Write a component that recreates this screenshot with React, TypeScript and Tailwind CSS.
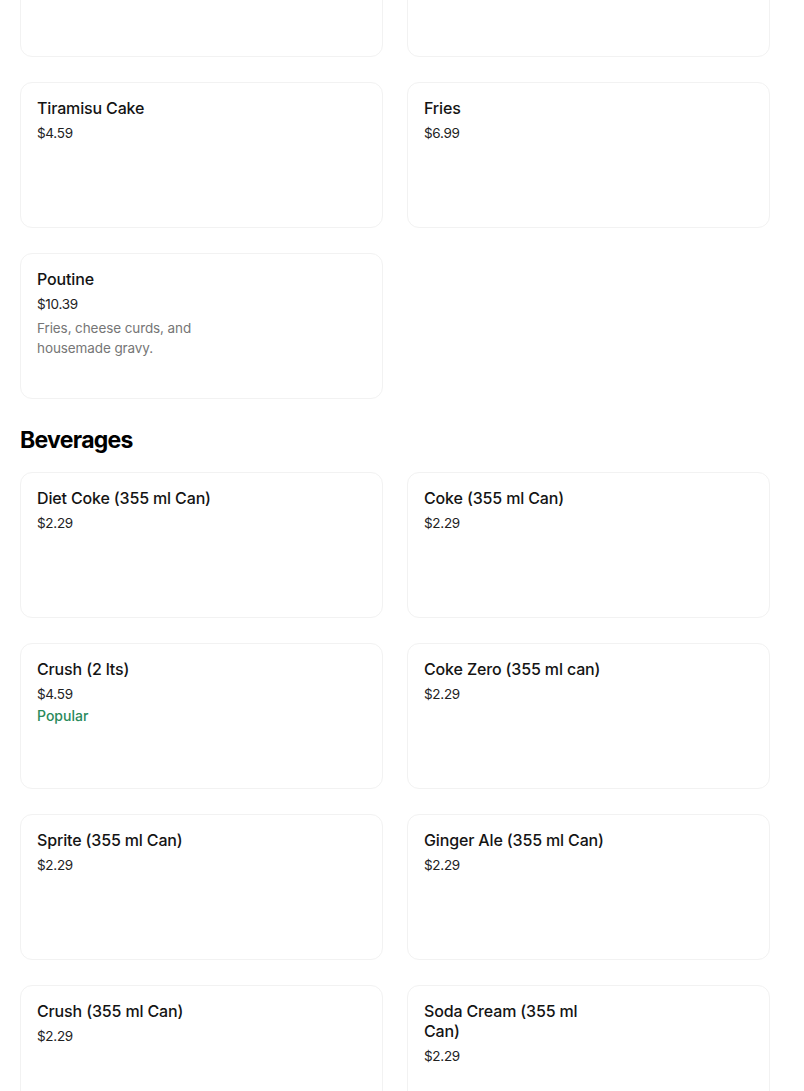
import React from "react";

type Item = { name: string; price: string; desc?: string; popular?: boolean };

const top: Item[] = [
  { name: "", price: "" },
  { name: "", price: "" },
  { name: "Tiramisu Cake", price: "$4.59" },
  { name: "Fries", price: "$6.99" },
  { name: "Poutine", price: "$10.39", desc: "Fries, cheese curds, and housemade gravy." },
];

const bev: Item[] = [
  { name: "Diet Coke (355 ml Can)", price: "$2.29" },
  { name: "Coke (355 ml Can)", price: "$2.29" },
  { name: "Crush (2 lts)", price: "$4.59", popular: true },
  { name: "Coke Zero (355 ml can)", price: "$2.29" },
  { name: "Sprite (355 ml Can)", price: "$2.29" },
  { name: "Ginger Ale (355 ml Can)", price: "$2.29" },
  { name: "Crush (355 ml Can)", price: "$2.29" },
  { name: "Soda Cream (355 ml Can)", price: "$2.29" },
];

function Card({ item }: { item: Item }) {
  return (
    <div className="h-[146px] rounded-xl border border-[#f2f2f2] bg-white px-4 pt-[15px]">
      {item.name && (
        <div className="max-w-[186px]">
          <div className="text-[16px] leading-5 font-medium tracking-[-0.15px] text-[#141414]">{item.name}</div>
          <div className="mt-[5px] text-[13.5px] leading-5 tracking-[-0.3px] text-[#222]">{item.price}</div>
          {item.desc && (
            <div className="mt-1 text-[13.5px] leading-5 tracking-[-0.1px] text-[#767676]">{item.desc}</div>
          )}
          {item.popular && (
            <div className="mt-[2px] text-[14px] leading-5 font-medium text-[#2a8a5b]">Popular</div>
          )}
        </div>
      )}
    </div>
  );
}

export default function App() {
  return (
    <div className="min-h-screen bg-white overflow-hidden" style={{ fontFamily: "Inter, 'Noto Sans', sans-serif" }}>
      <div className="w-[750px] ml-5 -mt-[89px]">
        <div className="grid grid-cols-2 gap-x-6 gap-y-[25px]">
          {top.map((it, i) => (
            <Card key={i} item={it} />
          ))}
        </div>
        <h2 className="mt-[25px] mb-4 text-[23px] leading-8 font-bold tracking-[-0.7px] text-black">Beverages</h2>
        <div className="grid grid-cols-2 gap-x-6 gap-y-[25px]">
          {bev.map((it, i) => (
            <Card key={i} item={it} />
          ))}
        </div>
      </div>
    </div>
  );
}
